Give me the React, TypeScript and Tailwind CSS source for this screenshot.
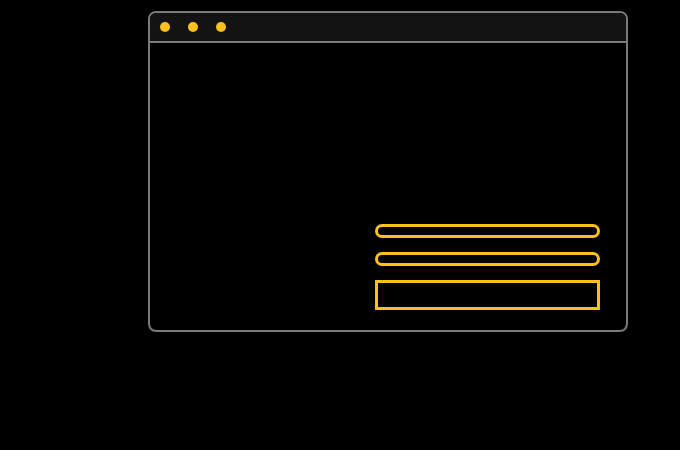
export default function App() {
  return (
    <div className="h-[450px] w-[680px] bg-black pl-[148px] pt-[11px]">
      <div className="flex h-[321px] w-[480px] flex-col overflow-hidden rounded-[8px] border-[2.5px] border-[#7a7a7a] bg-black">
        <div className="flex h-[30px] items-center gap-[18px] border-b-[2.5px] border-[#7a7a7a] bg-[#131313] pl-[10px]">
          <span className="h-[10px] w-[10px] rounded-full bg-[#fcc21b]" />
          <span className="h-[10px] w-[10px] rounded-full bg-[#fcc21b]" />
          <span className="h-[10px] w-[10px] rounded-full bg-[#fcc21b]" />
        </div>
        <div className="flex flex-1 flex-col items-end justify-end gap-[14px] pb-[20px] pr-[26px]">
          <div className="h-[14px] w-[225px] rounded-full border-[3px] border-[#fcc21b]" />
          <div className="h-[14px] w-[225px] rounded-full border-[3px] border-[#fcc21b]" />
          <div className="h-[30px] w-[225px] border-[3px] border-[#fcc21b]" />
        </div>
      </div>
    </div>
  );
}
